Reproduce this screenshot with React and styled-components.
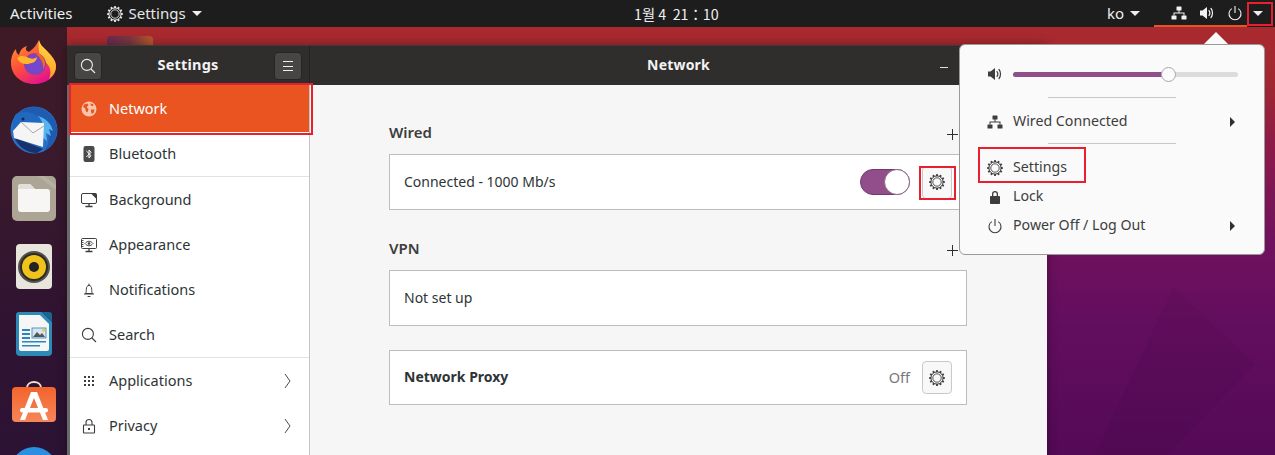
import React from 'react';
import styled, { createGlobalStyle } from 'styled-components';

const Global = createGlobalStyle`
  html, body { margin: 0; padding: 0; width: 1275px; height: 455px; overflow: hidden; background: #000; }
  * { box-sizing: border-box; }
  body { font-family: "Noto Sans", "Noto Sans CJK KR", sans-serif; font-size: 15px; }
`;

const Screen = styled.div`
  width: 1275px; height: 455px; display: flex; flex-direction: column; overflow: hidden; position: relative;
`;
const TopBar = styled.header`
  height: 27px; flex: none; background: #1d1d1d; color: #f0f0f0; display: grid;
  grid-template-columns: 634px 1fr auto; align-items: center; position: relative; z-index: 5;
`;
const BarLeft = styled.div`display: flex; align-items: center; padding-left: 10px;`;
const AppMenu = styled.div`display: flex; align-items: center; margin-left: 34px; gap: 6px; color: #e6e6e6;`;
const BarText = styled.span`font-size: 15px; line-height: 27px; white-space: pre;`;
const Clock = styled.span`font-size: 14.3px; font-family: "Noto Sans CJK KR", "Noto Sans", sans-serif; white-space: pre; line-height: 27px;`;
const BarRight = styled.div`display: flex; align-items: center; height: 27px;`;
const Lang = styled.div`display: flex; align-items: center; gap: 6px; margin-right: 14px;`;
const StatusMenu = styled.div`
  display: flex; align-items: center; height: 27px; width: 93px; padding-left: 17px; gap: 12px; border-bottom: 2px solid #e95420;
`;
const DownArrow = styled.i`
  display: block; width: 0; height: 0; border-left: 5px solid transparent; border-right: 5px solid transparent;
  border-top: 5px solid #eee;
`;
const TrayArrow = styled(DownArrow)`margin: 0 12px 0 6px;`;

const Desktop = styled.main`
  flex: 1; display: flex; position: relative; overflow: hidden;
  background: linear-gradient(180deg, #a92a2f 0%, #a2282f 12%, #8b1a4a 28%, #70115e 50%, #620e5e 70%, #540a56 100%);
`;
const WallpaperFacet = styled.div`
  position: absolute; left: 1095px; top: 260px; width: 160px; height: 168px; background: rgba(30, 0, 40, .06);
  clip-path: polygon(49% 0, 100% 46%, 45% 100%, 0 100%);
`;
const Dock = styled.nav`
  width: 67px; flex: none; display: flex; flex-direction: column; align-items: center;
  padding: 1px 0 0 1px;
  background: linear-gradient(180deg, #3f1a25 0%, #3a1a2c 30%, #2f1331 70%, #2c1234 100%);
`;
const DockSlot = styled.div`height: 68px; width: 66px; flex: none; display: flex; justify-content: center; align-items: center;`;
const BackFolder = styled.div`
  position: absolute; left: 107px; top: 9px; width: 46px; height: 12px; border-radius: 4px 4px 0 0;
  background: linear-gradient(90deg, #6b2a4e 0%, #7a3540 50%, #b8582a 100%);
`;

const Window = styled.section`
  position: absolute; left: 67px; top: 18px; width: 980px; height: 420px; display: flex; flex-direction: column;
  box-shadow: 0 0 10px rgba(0,0,0,.35);
`;
const Header = styled.div`
  height: 40px; flex: none; display: flex; background: #2f2e2d; color: #f3f3f3;
  border-top: 1px solid #3c3b3a;
`;
const HeaderSide = styled.div`
  width: 243px; flex: none; display: flex; align-items: center; justify-content: space-between; padding: 0 7px 0 7px;
  border-right: 1px solid #232322;
`;
const HeadBtn = styled.button`
  width: 28px; height: 28px; border: 1px solid #262626; border-radius: 4px; background: #474644; padding: 0;
  display: flex; align-items: center; justify-content: center;
`;
const HeadTitle = styled.span`font-weight: 700; font-size: ${p => p.$size || 14.5}px; letter-spacing: .2px; padding-bottom: 3px;`;
const HeaderMain = styled.div`flex: 1; display: flex; align-items: center; justify-content: center; position: relative;`;
const Minimize = styled.span`position: absolute; left: 630px; top: 21px; width: 8px; height: 1px; background: #ddd;`;

const Body = styled.div`flex: 1; display: flex; min-height: 0; border-left: 3px solid #6a6a6a;`;
const Sidebar = styled.aside`
  width: 240px; flex: none; background: #fff; border-right: 1px solid #c4c4c4; display: flex; flex-direction: column;
`;
const Row = styled.div`
  height: ${p => p.$h || 45}px; flex: none; display: flex; align-items: center; padding: 0 18px 0 11px; gap: 12px;
  color: ${p => (p.$active ? '#fff' : '#2e3436')}; background: ${p => (p.$active ? '#e95420' : 'transparent')};
  border-bottom: ${p => (p.$sep ? '1px solid #e2e2e2' : 'none')};
  box-sizing: ${p => (p.$sep ? 'content-box' : 'border-box')};
`;
const RowIcon = styled.span`width: 16px; height: 16px; flex: none; display: flex; align-items: center; justify-content: center;`;
const RowLabel = styled.span`flex: 1; font-size: 14.5px; white-space: nowrap; padding-bottom: 2px;`;

const Panel = styled.div`flex: 1; background: #f6f6f6; padding: 37px 80px 0 79px;`;
const Heading = styled.div`
  height: 20px; display: flex; align-items: center; justify-content: space-between;
  font-weight: 600; font-size: 15px; color: #3d3d3d; padding-right: 9px; margin-bottom: 12px;
`;
const PlusIcon = styled.svg`margin-top: 4px; flex: none;`;
const Frame = styled.div`
  height: ${p => p.$h || 56}px; background: #fff; border: 1px solid #bdbdbd; display: flex; align-items: center;
  padding: 0 14px; margin-bottom: ${p => p.$mb || 28}px; color: #2e3436; font-size: 14px;
`;
const FrameText = styled.span`flex: 1; font-weight: ${p => (p.$bold ? 700 : 400)}; white-space: nowrap; padding-bottom: 2px;`;
const OffText = styled.span`color: #77787a; margin-right: 12px; font-size: 14.5px; padding-bottom: 2px;`;
const Toggle = styled.div`
  width: 50px; height: 26px; border-radius: 13px; background: #924d8b; border: 1px solid #6f3a6a; position: relative; margin-right: 12px;
`;
const Knob = styled.span`
  position: absolute; right: -1px; top: -1px; width: 26px; height: 26px; border-radius: 50%; background: #fff; border: 1px solid #8c6a8a;
`;
const GearBtn = styled.button`
  width: 30px; height: 33px; border: 1px solid #c9c9c9; border-radius: 4px; background: #f8f8f8; padding: 0;
  display: flex; align-items: center; justify-content: center;
`;

const Popover = styled.div`
  position: absolute; left: 959px; top: 17px; width: 306px; height: 211px; background: #fafafa; border: 1px solid #9a9a9a; border-radius: 6px;
  padding: 15px 0 0; display: flex; flex-direction: column; color: #3d3d3d; z-index: 4;
`;
const PopArrow = styled.span`
  position: absolute; left: 1204px; top: 5px; width: 0; height: 0; z-index: 5;
  border-left: 12px solid transparent; border-right: 12px solid transparent; border-bottom: 12px solid #fafafa;
`;
const MenuRow = styled.div`
  height: ${p => p.$h || 29}px; flex: none; display: flex; align-items: center; padding: 0 ${p => p.$pr || 29}px 0 27px; gap: 10px; font-size: 14.2px;
`;
const MenuIcon = styled.span`width: 16px; height: 16px; flex: none; display: flex; align-items: center; justify-content: center;`;
const MenuLabel = styled.span`flex: 1; white-space: nowrap; padding-bottom: 2px;`;
const SubArrow = styled.i`
  display: block; width: 0; height: 0; border-top: 5px solid transparent; border-bottom: 5px solid transparent; border-left: 5px solid #2e2e2e;
`;
const MenuSep = styled.div`height: 1px; width: 128px; margin: ${p => p.$before}px 0 ${p => p.$after}px 88px; background: #c8c8c8;`;
const Track = styled.div`flex: 1; height: 5px; border-radius: 3px; background: #dcdcdc; position: relative;`;
const TrackFill = styled.div`height: 5px; border-radius: 3px; background: #924d8b;`;
const Thumb = styled.span`
  position: absolute; top: -5px; width: 15px; height: 15px; border-radius: 50%; background: #fbfbfb; border: 1px solid #a8a8a8; margin-left: -7px;
`;
const Callout = styled.div`
  position: absolute; border: 2px solid #e81f2e; pointer-events: none; z-index: 9;
  left: ${p => p.$x}px; top: ${p => p.$y}px; width: ${p => p.$w}px; height: ${p => p.$h}px;
`;

const Gear = ({ color = '#404040' }) => {
  const teeth = Array.from({ length: 12 }, (_, i) => i * 30);
  return (
    <svg width="16" height="16" viewBox="0 0 16 16" fill="none">
      {teeth.map(a => <rect key={a} x="7" y="0.1" width="2" height="2" rx=".4" fill={color} transform={`rotate(${a} 8 8)`} />)}
      <circle cx="8" cy="8" r="6.100" stroke={color} strokeWidth="1" />
      <circle cx="8" cy="8" r="4.200" stroke={color} strokeWidth=".9" />
    </svg>
  );
};
const Plus = () => (
  <PlusIcon width="11" height="11" viewBox="0 0 11 11" stroke="#2e2e2e" strokeWidth="1"><path d="M5.500 0v11M0 5.500h11" /></PlusIcon>
);
const Wired = ({ color = '#3d3d3d' }) => (
  <svg width="16" height="16" viewBox="0 0 16 16" fill={color}>
    <rect x="5.500" y="1.500" width="5" height="4" rx=".5" />
    <rect x="0.500" y="10.500" width="5" height="4" rx=".5" />
    <rect x="10.500" y="10.500" width="5" height="4" rx=".5" />
    <path d="M7.500 5h1v2.500H13.500v3h-1v-2h-9v2h-1v-3h5z" />
  </svg>
);
const Speaker = ({ color = '#3d3d3d' }) => (
  <svg width="16" height="16" viewBox="0 0 16 16" fill="none">
    <path d="M1 5.500h2.500L8 2v12L3.500 10.500H1z" fill={color} />
    <path d="M10 5.500c1 1.400 1 3.600 0 5" stroke={color} strokeWidth="1.200" strokeLinecap="round" />
    <path d="M12 3.500c2 2.400 2 6.600 0 9" stroke={color} strokeWidth="1.200" strokeLinecap="round" />
  </svg>
);
const Power = ({ color = '#3d3d3d' }) => (
  <svg width="16" height="16" viewBox="0 0 16 16" fill="none" stroke={color} strokeWidth="1.100">
    <path d="M4.800 3.600a6 6 0 1 0 6.400 0" />
    <path d="M8 1v7" />
  </svg>
);
const Lock = () => (
  <svg width="16" height="16" viewBox="0 0 16 16" fill="#3d3d3d">
    <path d="M5 7V5a3 3 0 0 1 6 0v2h-1.300V5a1.700 1.700 0 0 0-3.400 0v2z" />
    <rect x="3" y="7" width="10" height="8" rx=".8" />
  </svg>
);
const Globe = () => (
  <svg width="16" height="16" viewBox="0 0 16 16">
    <circle cx="8" cy="8" r="7.500" fill="#f9c6ad" />
    <path d="M3 3.600 6.200 2.400 7.600 4 5.600 6.300 7.600 8 6.400 11.500 4.600 10 4.400 7.600 2 6zM10 8.400h3.600l-.8 3-2 1.600-.9-2.400zM9.400 2.200 12.400 3.400 12 5.200 9.800 4.600z" fill="#e95420" />
  </svg>
);
const Bluetooth = () => (
  <svg width="16" height="16" viewBox="0 0 16 16">
    <rect x="2.500" y="0" width="11" height="16" rx="2" fill="#4a4a4a" />
    <path d="M5.400 5 10 9.600 8 12V4l2 2.300L5.400 11" fill="none" stroke="#fff" strokeWidth="1" />
  </svg>
);
const Background = () => (
  <svg width="16" height="16" viewBox="0 0 16 16" fill="none" stroke="#3d3d3d">
    <rect x=".5" y="1.500" width="15" height="10" rx="1.500" />
    <path d="M10 1.500h5.500V7z" fill="#3d3d3d" stroke="none" />
    <path d="M8 11.500v2.500M4.500 14.500h7" strokeWidth="1.300" />
  </svg>
);
const Appearance = () => (
  <svg width="16" height="16" viewBox="0 0 16 16" fill="none" stroke="#3d3d3d">
    <rect x=".5" y="1.500" width="15" height="10" rx="1" />
    <path d="M.5 3.500h2M.5 5.500h2M.5 7.500h2M.5 9.500h2" strokeWidth=".9" />
    <path d="M4 6.500c2.400-3 5.600-3 8 0-2.400 3-5.600 3-8 0z" strokeWidth=".9" />
    <circle cx="8" cy="6.500" r="1.300" fill="#3d3d3d" stroke="none" />
    <path d="M8 11.500v2.500M4.500 14.500h7" strokeWidth="1.300" />
  </svg>
);
const Bell = () => (
  <svg width="16" height="16" viewBox="0 0 16 16" fill="none" stroke="#3d3d3d" strokeWidth="1">
    <path d="M4.500 11.500c.8-1 .8-2.500.8-4.200C5.300 5 6.400 3.400 8 3.400s2.700 1.600 2.700 3.900c0 1.700 0 3.200.8 4.200z" />
    <path d="M3 12h10M8 1.600v1.800M6.600 14.500h2.800" />
  </svg>
);
const SearchIcon = ({ color = '#3d3d3d' }) => (
  <svg width="16" height="16" viewBox="0 0 16 16" fill="none" stroke={color} strokeWidth="1.100">
    <circle cx="6.900" cy="6.900" r="5.500" />
    <path d="m11 11 4 4" />
  </svg>
);
const Dots = () => (
  <svg width="16" height="16" viewBox="0 0 16 16" fill="#3d3d3d">
    {[3, 7, 11].flatMap(y => [3, 7, 11].map(x => <rect key={`${x}${y}`} x={x} y={y} width="2" height="2" />))}
  </svg>
);
const PrivacyLock = () => (
  <svg width="16" height="16" viewBox="0 0 16 16" fill="none" stroke="#3d3d3d" strokeWidth="1.100">
    <path d="M5 7V4.500a3 3 0 0 1 6 0V7" />
    <rect x="2.500" y="7" width="11" height="8" rx=".5" />
    <rect x="7" y="10" width="2" height="2" fill="#3d3d3d" stroke="none" />
  </svg>
);
const Chevron = () => (
  <svg width="7" height="16" viewBox="0 0 7 16" fill="none" stroke="#4a4a4a" strokeWidth="1"><path d="M1 1l5 7-5 7" /></svg>
);
const Hamburger = () => (
  <svg width="16" height="16" viewBox="0 0 16 16" stroke="#eee" strokeWidth="1"><path d="M3 3.500h10M3 8.500h10M3 12.500h10" /></svg>
);

const Firefox = () => (
  <svg width="46" height="46" viewBox="0 0 46 46">
    <defs>
      <linearGradient id="ffa" x1="0" y1="0" x2=".6" y2="1"><stop offset="0" stopColor="#ff9a2e" /><stop offset=".55" stopColor="#ff4f3a" /><stop offset="1" stopColor="#e3148c" /></linearGradient>
      <linearGradient id="ffb" x1=".7" y1="0" x2=".5" y2="1"><stop offset="0" stopColor="#ffe24a" /><stop offset="1" stopColor="#ff9a1f" /></linearGradient>
      <radialGradient id="ffc" cx=".5" cy=".6" r=".6"><stop offset="0" stopColor="#6a4bd8" /><stop offset="1" stopColor="#8a3fb0" /></radialGradient>
    </defs>
    <path d="M28 1c1 5 4 7 8 11 5 5 9 10 9 15 0 11-10 18-22 18C10 45 0 36 0 24 0 18 2 13 5 10c0 3 1 5 3 6 1-5 4-8 8-9-2 3-1 5 2 6 4-3 7-6 10-12z" fill="url(#ffa)" />
    <path d="M28 1c1 5 4 7 8 11 5 5 9 10 9 15 0 6-3 10-7 13 2-4 2-10-1-14-2-3-5-4-7-7-2-3-3-12-2-18z" fill="url(#ffb)" />
    <circle cx="24" cy="25" r="11" fill="url(#ffc)" />
    <path d="M6 19c4-3 8-2 12 0 3 1 6 1 8-1 0 5-6 7-11 7-4 0-7-2-9-6z" fill="#ffb52b" />
    <path d="M24 14c5 0 10 4 10 10 0 3-1 5-2 6 1-6-3-12-8-16z" fill="#f8681c" />
  </svg>
);
const Thunderbird = () => (
  <svg width="48" height="48" viewBox="0 0 48 48">
    <circle cx="24" cy="24" r="23.500" fill="#2a6fc6" />
    <path d="M8 9C14 1 24-1 33 3c8 4 14 12 14 21 0 9-5 17-13 21 5-6 6-14 3-21C33 14 22 9 8 9z" fill="#1f5bb0" />
    <path d="M28 10c7 2 13 7 15 15l-4-2 2 7-5-3 1 8-4-3-1 6z" fill="#58b4ee" />
    <path d="M6 8C14 4 24 6 30 12l3 6-22-2-7 8C2 18 3 12 6 8z" fill="#2168c0" />
    <path d="M5 33c4 8 12 14 22 14l6-4-25-10z" fill="#16336e" />
    <path d="M3 25 11 16 34 17 33 41 4 32z" fill="#f5f5f5" />
    <path d="M11 16 23 27 34 20" fill="none" stroke="#a9a9a9" strokeWidth="1" />
    <circle cx="13" cy="13" r="1.500" fill="#0d2a55" />
  </svg>
);
const Files = () => (
  <svg width="44" height="45" viewBox="0 0 44 45">
    <rect x="0" y="0" width="44" height="45" rx="5" fill="#aca595" />
    <path d="M26 0 44 14V9L32 0z" fill="#b7b1a2" />
    <path d="M6 11a3 3 0 0 1 3-3h9l5 5h12a3 3 0 0 1 3 3v17a3 3 0 0 1-3 3H9a3 3 0 0 1-3-3z" fill="#f7f6f5" />
    <path d="M6 11a3 3 0 0 1 3-3h9l5 5H6z" fill="#e2dfd8" />
  </svg>
);
const Rhythmbox = () => (
  <svg width="36" height="45" viewBox="0 0 36 45">
    <rect x="0" y="0" width="36" height="45" rx="4" fill="#e8e5dc" />
    <circle cx="18" cy="23" r="16" fill="#55534f" />
    <circle cx="18" cy="23" r="14" fill="#2c2a27" />
    <circle cx="18" cy="23" r="12" fill="#efc31c" />
    <circle cx="18" cy="23" r="5" fill="#262421" />
  </svg>
);
const Writer = () => (
  <svg width="36" height="44" viewBox="0 0 36 44">
    <path d="M3 0h23l10 10v30a4 4 0 0 1-4 4H4a4 4 0 0 1-4-4V3a3 3 0 0 1 3-3z" fill="#2d89b5" />
    <path d="M3 3h21l9 9v25a2 2 0 0 1-2 2H5a2 2 0 0 1-2-2z" fill="#f6f6f6" />
    <path d="M26 0h7a3 3 0 0 1 3 3v7z" fill="#1b6690" />
    <rect x="6" y="17" width="8" height="2" fill="#2b86bd" /><rect x="6" y="21" width="8" height="2" fill="#2b86bd" /><rect x="6" y="25" width="8" height="2" fill="#2b86bd" />
    <rect x="6" y="29" width="24" height="1.500" fill="#2b86bd" /><rect x="6" y="33" width="18" height="1.500" fill="#2b86bd" />
    <rect x="16" y="16" width="14" height="10" fill="#d8e4ee" stroke="#2b86bd" strokeWidth=".8" />
    <path d="M17 25l4-5 3 3 2-2 3 4z" fill="#555" /><circle cx="27.500" cy="18" r="1.500" fill="#f6c52a" />
  </svg>
);
const Software = () => (
  <svg width="44" height="42" viewBox="0 0 44 42">
    <defs>
      <linearGradient id="swg" x1="0" y1="0" x2="0" y2="1"><stop offset="0" stopColor="#f2642c" /><stop offset="1" stopColor="#f6865a" /></linearGradient>
    </defs>
    <path d="M15 7c0-8 14-8 14 0" fill="none" stroke="#eadfcf" strokeWidth="2" />
    <rect x="0" y="6" width="44" height="35" rx="4" fill="url(#swg)" />
    <path d="M19 11h6l11 28h-5L22 17l-9 22H8z" fill="#fff" />
    <rect x="8" y="27" width="28" height="4.500" rx="2.200" fill="#fff" />
  </svg>
);

const sideItems = [
  { label: 'Bluetooth', icon: <Bluetooth />, sep: true, h: 44 },
  { label: 'Background', icon: <Background /> },
  { label: 'Appearance', icon: <Appearance /> },
  { label: 'Notifications', icon: <Bell /> },
  { label: 'Search', icon: <SearchIcon />, sep: true },
  { label: 'Applications', icon: <Dots />, more: true },
  { label: 'Privacy', icon: <PrivacyLock />, more: true },
];

export default function App() {
  return (
    <Screen>
      <Global />
      <TopBar>
        <BarLeft>
          <BarText>Activities</BarText>
          <AppMenu>
            <Gear color="#e8e8e8" />
            <BarText>Settings</BarText>
            <DownArrow />
          </AppMenu>
        </BarLeft>
        <Clock>1월 4  21：10</Clock>
        <BarRight>
          <Lang><BarText>ko</BarText><DownArrow /></Lang>
          <StatusMenu><Wired color="#f2f2f2" /><Speaker color="#f2f2f2" /><Power color="#f2f2f2" /></StatusMenu>
          <TrayArrow />
        </BarRight>
      </TopBar>
      <Desktop>
        <WallpaperFacet />
        <Dock>
          <DockSlot><Firefox /></DockSlot>
          <DockSlot><Thunderbird /></DockSlot>
          <DockSlot><Files /></DockSlot>
          <DockSlot><Rhythmbox /></DockSlot>
          <DockSlot><Writer /></DockSlot>
          <DockSlot><Software /></DockSlot>
          <DockSlot><svg width="46" height="46" viewBox="0 0 46 46"><circle cx="23" cy="23" r="23" fill="#2a8fe0" /></svg></DockSlot>
        </Dock>
        <BackFolder />
        <Window>
          <Header>
            <HeaderSide>
              <HeadBtn><SearchIcon color="#eee" /></HeadBtn>
              <HeadTitle>Settings</HeadTitle>
              <HeadBtn><Hamburger /></HeadBtn>
            </HeaderSide>
            <HeaderMain>
              <HeadTitle $size={14}>Network</HeadTitle>
              <Minimize />
            </HeaderMain>
          </Header>
          <Body>
            <Sidebar>
              <Row $active $h={47}><RowIcon><Globe /></RowIcon><RowLabel>Network</RowLabel></Row>
              {sideItems.map(it => (
                <Row key={it.label} $sep={it.sep} $h={it.h}>
                  <RowIcon>{it.icon}</RowIcon>
                  <RowLabel>{it.label}</RowLabel>
                  {it.more && <Chevron />}
                </Row>
              ))}
            </Sidebar>
            <Panel>
              <Heading>Wired<Plus /></Heading>
              <Frame>
                <FrameText>Connected - 1000 Mb/s</FrameText>
                <Toggle><Knob /></Toggle>
                <GearBtn><Gear /></GearBtn>
              </Frame>
              <Heading>VPN<Plus /></Heading>
              <Frame $mb={24}><FrameText>Not set up</FrameText></Frame>
              <Frame $h={55}>
                <FrameText $bold>Network Proxy</FrameText>
                <OffText>Off</OffText>
                <GearBtn><Gear /></GearBtn>
              </Frame>
            </Panel>
          </Body>
        </Window>
        <PopArrow />
        <Popover>
          <MenuRow $h={28} $pr={26}>
            <MenuIcon><Speaker /></MenuIcon>
            <Track><TrackFill style={{ width: '69%' }} /><Thumb style={{ left: '69%' }} /></Track>
          </MenuRow>
          <MenuSep $before={9} $after={9} />
          <MenuRow><MenuIcon><Wired /></MenuIcon><MenuLabel>Wired Connected</MenuLabel><SubArrow /></MenuRow>
          <MenuSep $before={7} $after={9} />
          <MenuRow><MenuIcon><Gear /></MenuIcon><MenuLabel>Settings</MenuLabel></MenuRow>
          <MenuRow><MenuIcon><Lock /></MenuIcon><MenuLabel>Lock</MenuLabel></MenuRow>
          <MenuRow><MenuIcon><Power /></MenuIcon><MenuLabel>Power Off / Log Out</MenuLabel><SubArrow /></MenuRow>
        </Popover>
      </Desktop>
      <Callout $x={69} $y={83} $w={244} $h={52} />
      <Callout $x={978} $y={147} $w={108} $h={36} />
      <Callout $x={919} $y={166} $w={37} $h={34} />
      <Callout $x={1247} $y={2} $w={26} $h={24} />
    </Screen>
  );
}
